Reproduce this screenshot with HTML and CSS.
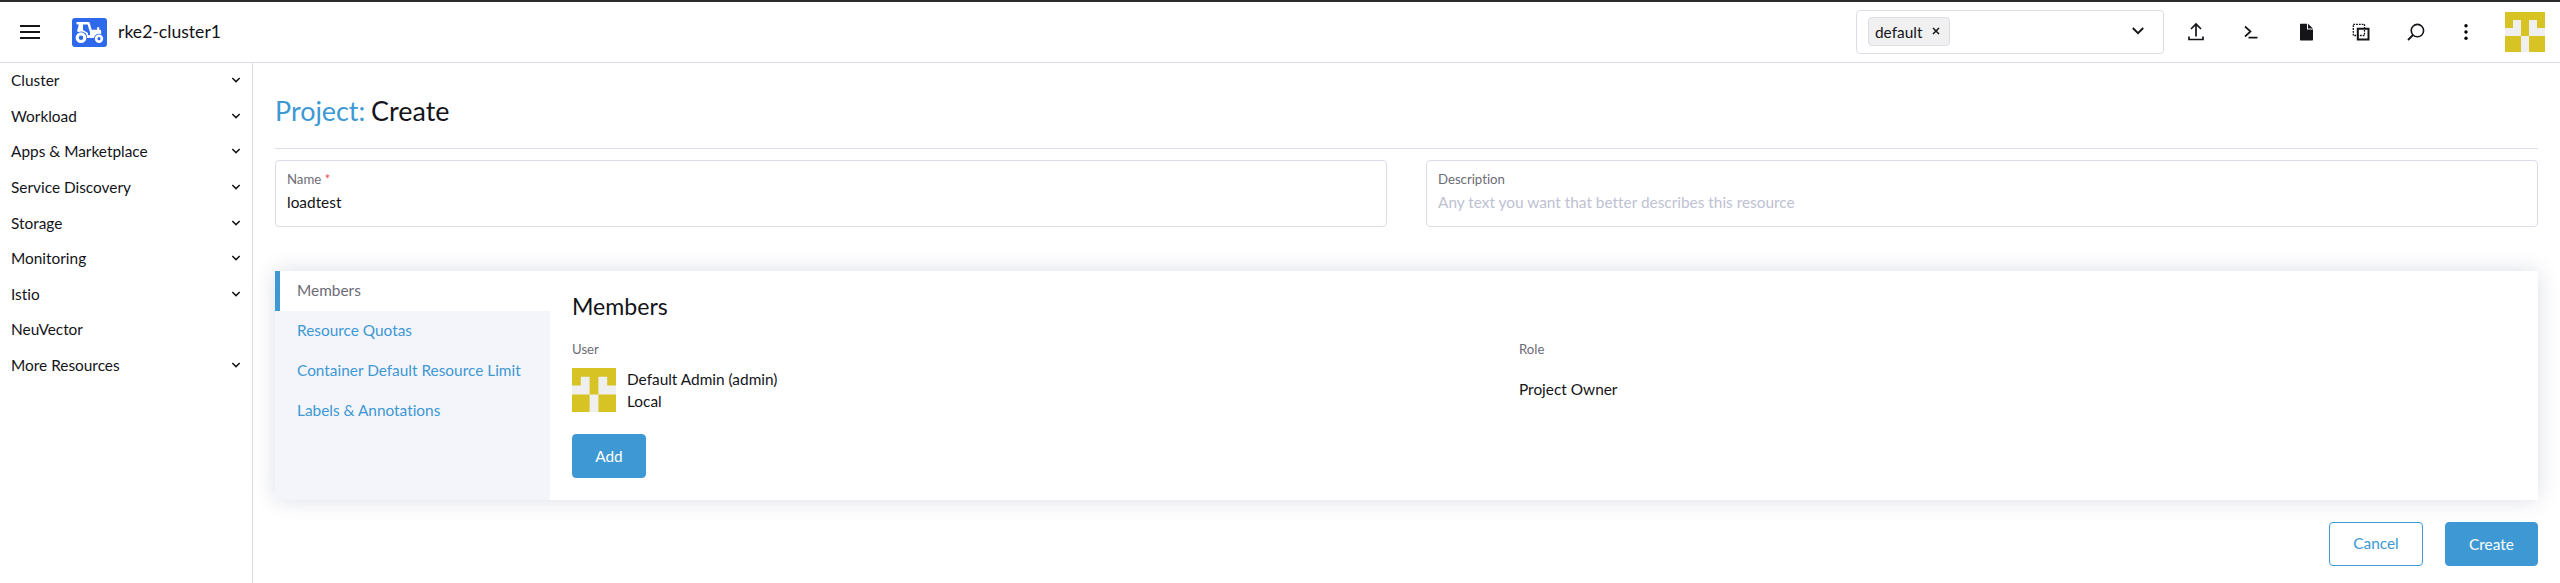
FILE: index.html
```html
<!DOCTYPE html>
<html lang="en">
<head>
<meta charset="utf-8">
<title>rke2-cluster1 - Project: Create</title>
<link rel="stylesheet" href="styles.css">
</head>
<body>
<svg class="defs" width="0" height="0" aria-hidden="true">
  <symbol id="avatar" viewBox="0 0 5 5"><path fill="#efefef" d="M0 0h5v5H0z"/><path fill="#d7c323" d="M0 0h5v2H4V1H3v2H2V1H1v1H0zM0 3h2v2H0zM3 3h2v2H3z"/></symbol>
  <symbol id="chev" viewBox="0 0 10 6"><path d="M1.3 1l3.7 3.6L8.7 1" fill="none" stroke="currentColor" stroke-width="1.5"/></symbol>
</svg>
<header class="header">
  <svg class="burger" viewBox="0 0 20 14"><path d="M0 1h20M0 7h20M0 13h20" stroke="#141419" stroke-width="2"/></svg>
  <svg class="logo" viewBox="0 0 35 29">
    <rect width="35" height="29" rx="3" fill="#2f69eb"/>
    <path d="M5.500 5.200H16.500L18.800 13H28V18.500H16" fill="none" stroke="#fff" stroke-width="2.400" stroke-linejoin="round" stroke-linecap="round"/>
    <path d="M7 5.500h4v6.500l5 3v5h-2.500L11 15 5 13.500z" fill="#fff"/>
    <path d="M18 13h9v5h-9z" fill="#fff"/>
    <path d="M26.200 10v3" stroke="#fff" stroke-width="2.200" stroke-linecap="round"/>
    <circle cx="9" cy="19.700" r="6.300" fill="#2f69eb"/>
    <circle cx="9" cy="19.700" r="3.800" fill="none" stroke="#fff" stroke-width="3.200"/>
    <circle cx="27" cy="20.700" r="5" fill="#2f69eb"/>
    <circle cx="27" cy="20.700" r="2.900" fill="none" stroke="#fff" stroke-width="2.600"/>
    <path d="M15 18.700h7" stroke="#fff" stroke-width="2.400"/>
  </svg>
  <div class="cluster-name">rke2-cluster1</div>
  <div class="ns-select">
    <span class="tag">default<svg class="x" viewBox="0 0 8 8"><path d="M1 1l6 6M7 1L1 7" stroke="#141419" stroke-width="1.500"/></svg></span>
    <svg class="ns-chev" viewBox="0 0 12 8"><path d="M.8 1L6 6.200 11.200 1" fill="none" stroke="#141419" stroke-width="1.900"/></svg>
  </div>
  <div class="tools">
    <svg class="tool" viewBox="0 0 20 20"><path d="M10 14.500V2.500M5 7l5-5 5 5M3 14.500v3h14v-3" fill="none" stroke="#141419" stroke-width="1.700"/></svg>
    <svg class="tool" viewBox="0 0 20 20"><path d="M4 4.500L9.500 9.500 4 14.500M7.500 15.700H16.500" fill="none" stroke="#141419" stroke-width="1.700"/></svg>
    <svg class="tool" viewBox="0 0 20 20"><path d="M4.500 1.700H11v5.800h6v10.300a.7.700 0 0 1-.7.700H4.700a.7.700 0 0 1-.7-.7V2.200zM12 1.700L17 6.500h-5z" fill="#141419"/></svg>
    <svg class="tool" viewBox="0 0 20 20"><path d="M6.800 6.800h10.700v10.700H6.800z" fill="none" stroke="#141419" stroke-width="2"/><path d="M2.300 2.300h11.200v11.200H2.300z" fill="none" stroke="#141419" stroke-width="1.300" stroke-dasharray="1.800 1"/></svg>
    <svg class="tool" viewBox="0 0 20 20"><circle cx="11.400" cy="8.600" r="6.200" fill="none" stroke="#141419" stroke-width="1.600"/><path d="M7 13l-5 5" stroke="#141419" stroke-width="1.800"/></svg>
  </div>
  <svg class="dots" viewBox="0 0 4 16"><circle cx="2" cy="1.700" r="1.700"/><circle cx="2" cy="8" r="1.700"/><circle cx="2" cy="14.300" r="1.700"/></svg>
  <svg class="user"><use href="#avatar"/></svg>
</header>
<div class="body">
  <nav class="nav">
    <div class="nav-item">Cluster<svg class="chev"><use href="#chev"/></svg></div>
    <div class="nav-item">Workload<svg class="chev"><use href="#chev"/></svg></div>
    <div class="nav-item">Apps &amp; Marketplace<svg class="chev"><use href="#chev"/></svg></div>
    <div class="nav-item">Service Discovery<svg class="chev"><use href="#chev"/></svg></div>
    <div class="nav-item">Storage<svg class="chev"><use href="#chev"/></svg></div>
    <div class="nav-item">Monitoring<svg class="chev"><use href="#chev"/></svg></div>
    <div class="nav-item">Istio<svg class="chev"><use href="#chev"/></svg></div>
    <div class="nav-item">NeuVector</div>
    <div class="nav-item">More Resources<svg class="chev"><use href="#chev"/></svg></div>
  </nav>
  <main class="main">
    <h1 class="title"><span class="accent">Project:</span> Create</h1>
    <div class="fields">
      <div class="field"><div class="label">Name <span class="req">*</span></div><div class="value">loadtest</div></div>
      <div class="field"><div class="label">Description</div><div class="value placeholder">Any text you want that better describes this resource</div></div>
    </div>
    <section class="card">
      <div class="tabs">
        <div class="tab active">Members</div>
        <div class="tab">Resource Quotas</div>
        <div class="tab">Container Default Resource Limit</div>
        <div class="tab">Labels &amp; Annotations</div>
      </div>
      <div class="panel">
        <h2 class="panel-title">Members</h2>
        <div class="grid">
          <div class="label">User</div>
          <div class="label">Role</div>
          <div class="member"><svg class="face"><use href="#avatar"/></svg><div class="who"><div>Default Admin (admin)</div><div>Local</div></div></div>
          <div class="role">Project Owner</div>
        </div>
        <button class="btn primary add">Add</button>
      </div>
    </section>
    <footer class="actions">
      <button class="btn cancel">Cancel</button>
      <button class="btn primary create">Create</button>
    </footer>
  </main>
</div>
</body>
</html>
```
FILE: styles.css
```css
* { box-sizing: border-box; }
body {
  margin: 0;
  height: 583px;
  overflow: hidden;
  display: flex;
  flex-direction: column;
  font: 15.4px/22px Lato, sans-serif;
  font-variant-ligatures: none;
  color: #141419;
  background: #fff;
}
.defs { display: none; }
svg { display: block; flex: none; }
.header {
  flex: none;
  height: 63px;
  border-top: 2px solid #2e2c2f;
  border-bottom: 1px solid #dcdee7;
  display: flex;
  align-items: center;
  padding: 0 15px 0 20px;
}
.burger { width: 20px; height: 14px; }
.logo { width: 35px; height: 29px; margin-left: 32px; }
.cluster-name { margin-left: 11px; font-size: 17.6px; }
.ns-select {
  margin-left: auto;
  width: 308px;
  height: 44px;
  border: 1px solid #dcdee7;
  border-radius: 4px;
  display: flex;
  align-items: center;
  justify-content: space-between;
  padding: 0 19px 2px 11px;
}
.tag {
  width: 82px;
  height: 29px;
  border: 1px solid #dcdee7;
  border-radius: 4px;
  background: #f0f0f0;
  display: flex;
  align-items: center;
  justify-content: space-between;
  padding: 1px 9px 0 6px;
}
.x { width: 8px; height: 8px; margin-top: -2px; }
.ns-chev { width: 12px; height: 8px; }
.tools { display: flex; gap: 35px; margin-left: 22px; }
.tool { width: 20px; height: 20px; }
.dots { width: 4px; height: 16px; margin-left: 38px; }
.user { width: 40px; height: 40px; margin-left: 37px; }
.body { flex: 1; display: flex; min-height: 0; }
.nav { width: 253px; border-right: 1px solid #dcdee7; }
.nav-item {
  height: 35.6px;
  padding: 0 11px 1.2px;
  display: flex;
  align-items: center;
  justify-content: space-between;
}
.chev { width: 10px; height: 6px; }
.main { flex: 1; padding: 0 22px; }
.title {
  height: 86px;
  margin: 0 0 11px;
  padding-top: 31px;
  border-bottom: 1px solid #dcdee7;
  font-size: 26.9px;
  line-height: 34px;
  font-weight: 400;
  word-spacing: -1px;
}
.accent { color: #3d98d3; }
.fields { display: grid; grid-template-columns: 1fr 1fr; gap: 39px; }
.field {
  height: 67px;
  border: 1px solid #dcdee7;
  border-radius: 4px;
  padding: 8px 11px;
}
.label { font-size: 13.2px; line-height: 20px; color: #6c6c76; }
.req { color: #f64747; }
.value { line-height: 24px; margin-top: 1px; }
.placeholder { color: #bec1d2; }
.card {
  margin-top: 44px;
  height: 229px;
  display: flex;
  background: #fff;
  box-shadow: 0 0 22px #dcdee7;
}
.tabs { width: 275px; background: #f4f5fa; }
.tab { height: 40px; padding-left: 22px; line-height: 39px; color: #3d98d3; }
.active { background: #fff; border-left: 5px solid #3d98d3; padding-left: 17px; color: #6c6c76; }
.panel { flex: 1; padding: 21px 22px 22px; }
.panel-title { margin: 0; font-size: 23.1px; line-height: 28px; font-weight: 400; }
.grid {
  margin-top: 19px;
  display: grid;
  grid-template-columns: 947px 1fr;
  grid-template-rows: 20px 44px;
  row-gap: 9px;
}
.member { display: flex; gap: 11px; }
.face { width: 44px; height: 44px; }
.role { line-height: 43px; }
.btn {
  height: 44px;
  border: 1px solid #3d98d3;
  border-radius: 4px;
  padding: 0;
  font: inherit;
}
.primary { background: #3d98d3; color: #fff; }
.add { display: block; width: 74px; margin-top: 22px; }
.actions { display: flex; justify-content: flex-end; gap: 22px; margin-top: 22px; }
.cancel { width: 94px; background: #fff; color: #3d98d3; padding-bottom: 2px; }
.create { width: 93px; }
```
